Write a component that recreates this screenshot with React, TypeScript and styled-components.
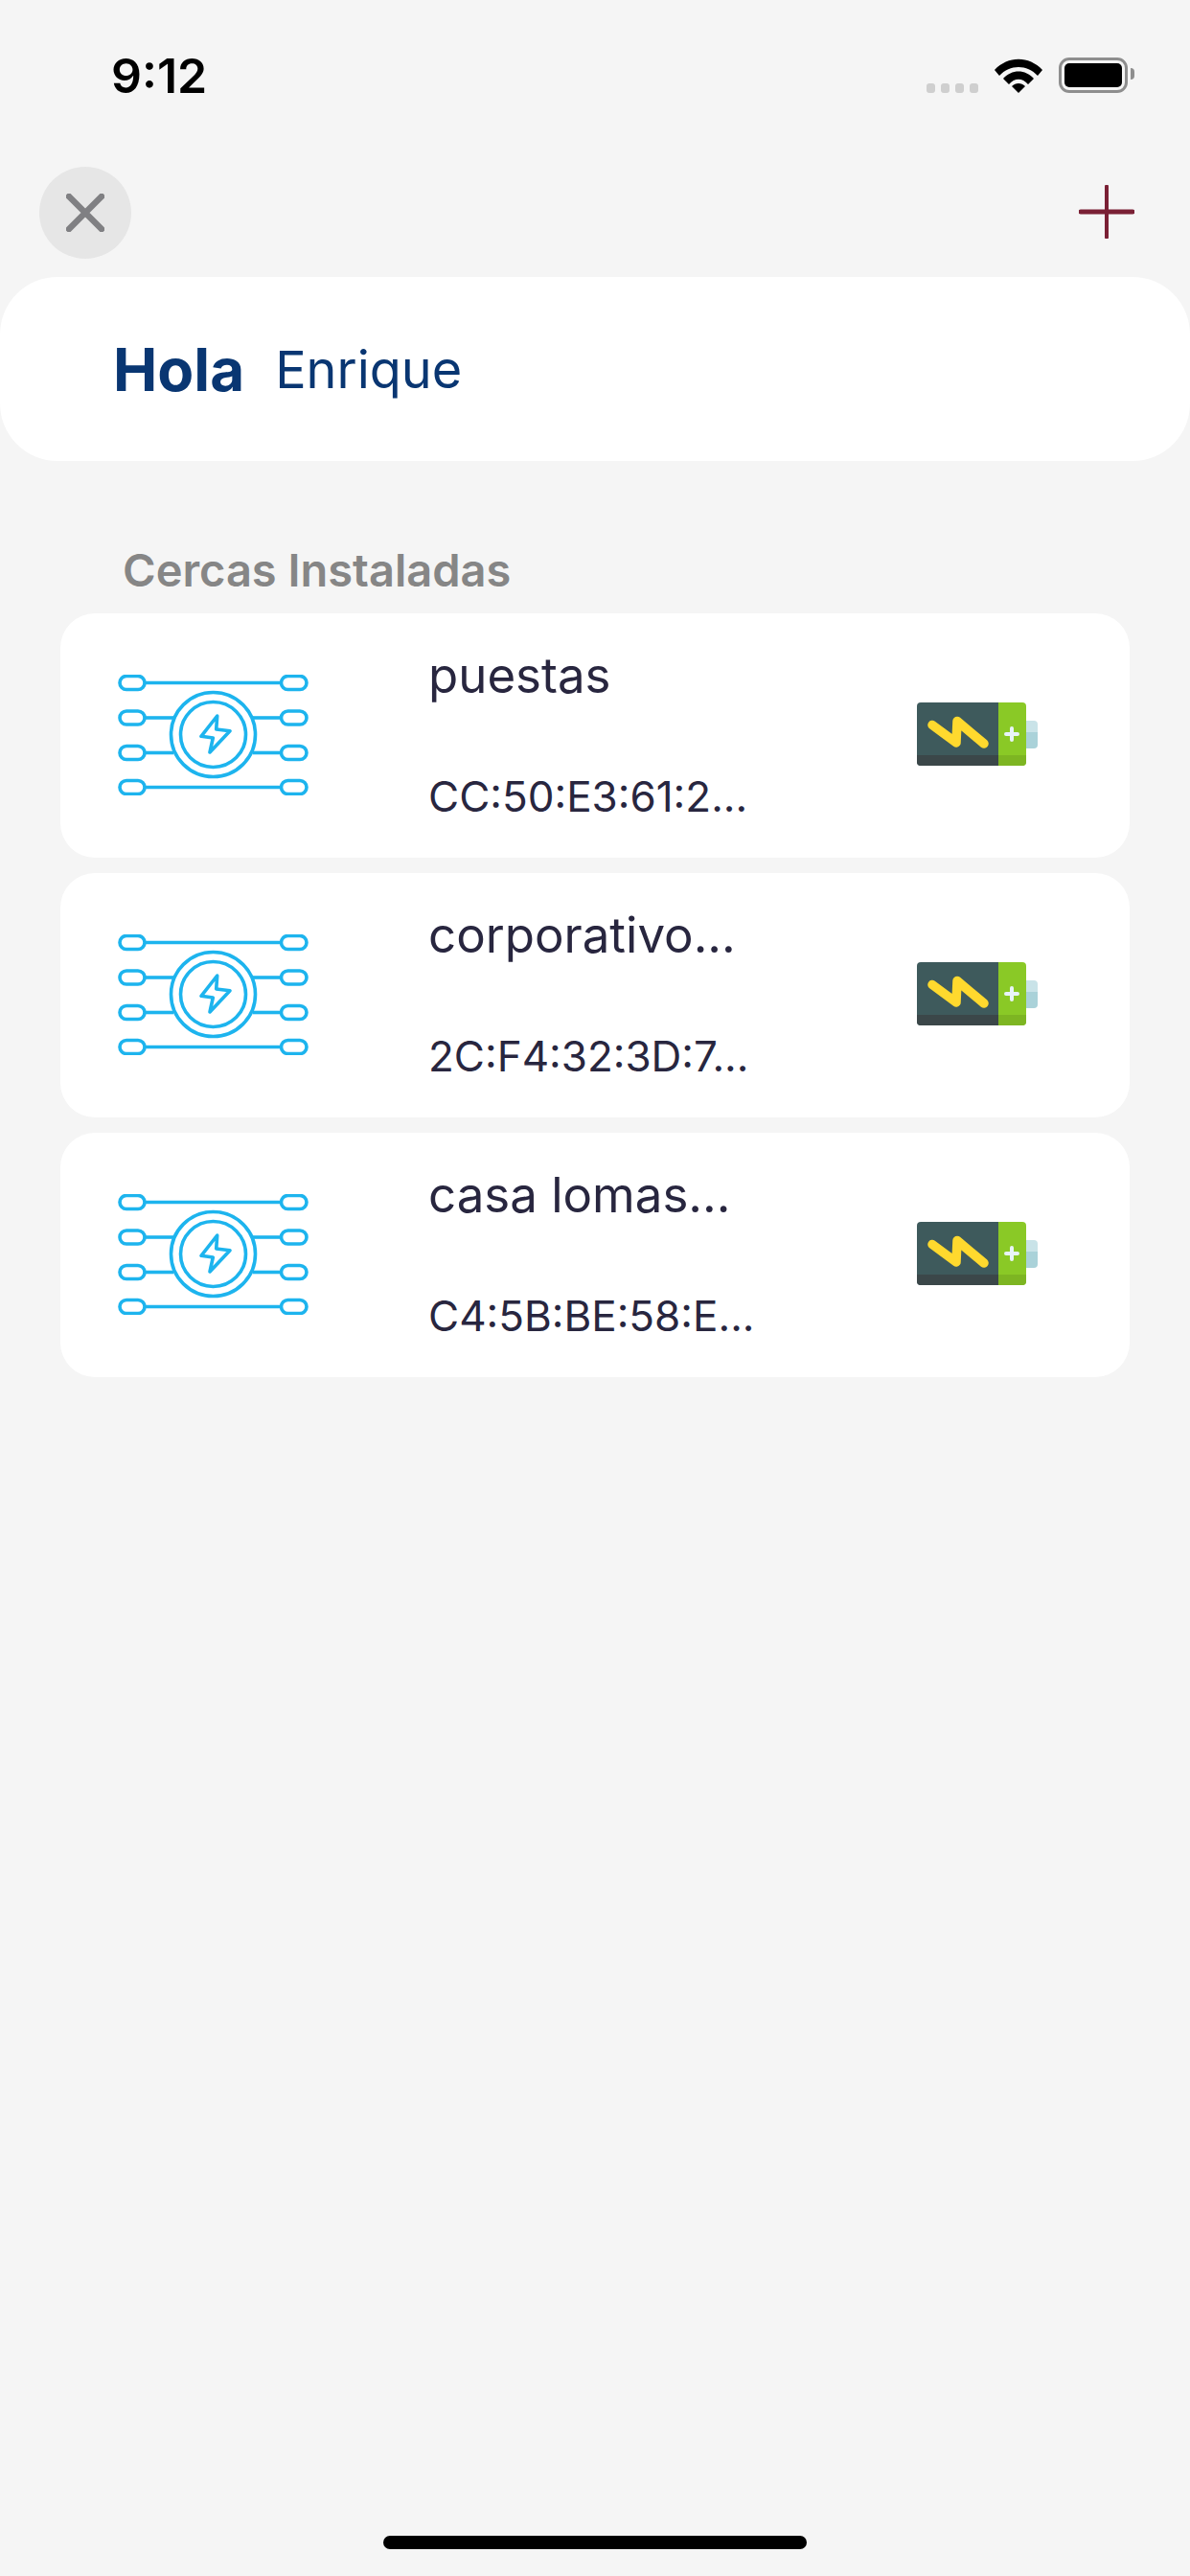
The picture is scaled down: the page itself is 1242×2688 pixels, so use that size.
import React from 'react';
import styled, { createGlobalStyle } from 'styled-components';

const fences = [
  { name: 'puestas', mac: 'CC:50:E3:61:2...' },
  { name: 'corporativo...', mac: '2C:F4:32:3D:7...' },
  { name: 'casa lomas...', mac: 'C4:5B:BE:58:E...' },
];

function FenceIcon() {
  const rows = [8.5, 45, 81.5, 117.5];
  return (
    <FenceSvg width="200" height="126" viewBox="0 0 200 126" fill="none" stroke="#1db4ee" strokeWidth="3.6">
      {rows.map((y, i) => {
        const inner = i === 1 || i === 2;
        return (
          <g key={y}>
            <rect x="2" y={y - 7} width="26" height="14" rx="7" />
            <rect x="170.5" y={y - 7} width="26.5" height="14" rx="7" />
            {inner ? (
              <>
                <line x1="28" y1={y} x2="58" y2={y} />
                <line x1="141" y1={y} x2="170.5" y2={y} />
              </>
            ) : (
              <line x1="28" y1={y} x2="170.5" y2={y} />
            )}
          </g>
        );
      })}
      <circle cx="99.5" cy="62.5" r="44" />
      <circle cx="99.5" cy="62.5" r="34" />
      <path d="M103.7 43 L87 64.3 L99.3 66 L96 81 L117 58.7 L102.7 57 Z" strokeLinejoin="round" />
    </FenceSvg>
  );
}

function BatteryIcon() {
  return (
    <BatterySvg width="128" height="68" viewBox="0 0 128 68">
      <path d="M115 20 h8 a4 4 0 0 1 4 4 v8 h-12 z" fill="#c9e3e8" />
      <path d="M115 32 h12 v13 a4 4 0 0 1 -4 4 h-8 z" fill="#aad2d9" />
      <path d="M5 1 H86 V67 H5 a4 4 0 0 1 -4 -4 V5 a4 4 0 0 1 4 -4 z" fill="#3e5a5c" />
      <path d="M1 56 H86 V67 H5 a4 4 0 0 1 -4 -4 z" fill="#3b4749" />
      <path d="M86 1 H111 a4 4 0 0 1 4 4 V63 a4 4 0 0 1 -4 4 H86 z" fill="#8ac926" />
      <path d="M86 56 H115 V63 a4 4 0 0 1 -4 4 H86 z" fill="#7db522" />
      <path d="M17 24.5 L42 43 L43 20.5 L71 44" fill="none" stroke="#ffd92e" strokeWidth="9.5" strokeLinecap="round" strokeLinejoin="round" />
      <path d="M94 34 H106 M100 28 V40" fill="none" stroke="#e8f4f8" strokeWidth="4" strokeLinecap="round" />
    </BatterySvg>
  );
}

function App() {
  return (
    <>
      <GlobalStyle />
      <Page>
        <StatusBar>
          <Time>9:12</Time>
          <StatusIcons>
            <Signal>
              <i /><i /><i /><i />
            </Signal>
            <svg width="52" height="38" viewBox="0 0 52 38">
              <path d="M1 14 C15 -1 37 -1 51 14 L46 20 C35 8 17 8 6 20 Z" fill="#000" />
              <path d="M10 23 C19 13 33 13 42 23 L36 29 C30 22 22 22 16 29 Z" fill="#000" />
              <path d="M19 31 C23 27 29 27 33 31 L26 38 Z" fill="#000" />
            </svg>
            <BatteryShell>
              <BatteryFill />
              <BatteryCap />
            </BatteryShell>
          </StatusIcons>
        </StatusBar>

        <TopBar>
          <CloseButton>
            <svg width="40" height="40" viewBox="0 0 40 40" fill="none" stroke="#808083" strokeWidth="6.5" strokeLinecap="round">
              <path d="M3 3 L37 37 M37 3 L3 37" />
            </svg>
          </CloseButton>
          <AddButton>
            <svg width="58" height="56" viewBox="0 0 58 56" fill="none" stroke="#7a2035" strokeLinecap="round">
              <path d="M2 28 H56" strokeWidth="5" />
              <path d="M29 1.5 V54.5" strokeWidth="4" />
            </svg>
          </AddButton>
        </TopBar>

        <Greeting>
          <Hello>Hola</Hello>
          <UserName>Enrique</UserName>
        </Greeting>

        <SectionTitle>Cercas Instaladas</SectionTitle>

        <List>
          {fences.map((f) => (
            <Card key={f.mac}>
              <FenceIcon />
              <Info>
                <Name>{f.name}</Name>
                <Mac>{f.mac}</Mac>
              </Info>
              <BatteryIcon />
            </Card>
          ))}
        </List>

        <HomeIndicator />
      </Page>
    </>
  );
}

export default App;

/* Styled Components */

const GlobalStyle = createGlobalStyle`
  html, body {
    margin: 0;
    padding: 0;
    background: #f5f5f5;
  }
`;

const Page = styled.div`
  width: 1242px;
  height: 2688px;
  display: flex;
  flex-direction: column;
  background: #f5f5f5;
  font-family: Inter, "Liberation Sans", sans-serif;
  overflow: hidden;
`;

const StatusBar = styled.div`
  height: 100px;
  padding: 56px 62px 0 116px;
  box-sizing: border-box;
  display: flex;
  justify-content: space-between;
  align-items: flex-start;
`;

const Time = styled.div`
  font-size: 50px;
  font-weight: 600;
  line-height: 46px;
  color: #000;
`;

const StatusIcons = styled.div`
  display: flex;
  align-items: flex-end;
  gap: 16px;
  height: 38px;
  margin-top: 3px;
`;

const Signal = styled.div`
  display: flex;
  gap: 6px;

  i {
    display: block;
    width: 9px;
    height: 10px;
    border-radius: 3px;
    background: #cfcfcf;
  }
`;

const BatteryShell = styled.div`
  position: relative;
  width: 72px;
  height: 37px;
  box-sizing: border-box;
  border: 3px solid #8e8e8e;
  border-radius: 11px;
  padding: 3px;
  margin-right: 3px;
`;

const BatteryFill = styled.div`
  height: 100%;
  background: #000;
  border-radius: 5px;
`;

const BatteryCap = styled.div`
  position: absolute;
  right: -10px;
  top: 8px;
  width: 4px;
  height: 12px;
  background: #8e8e8e;
  border-radius: 0 4px 4px 0;
`;

const TopBar = styled.div`
  height: 189px;
  padding: 74px 58px 20px 41px;
  box-sizing: border-box;
  display: flex;
  justify-content: space-between;
  align-items: flex-start;
`;

const CloseButton = styled.div`
  width: 96px;
  height: 96px;
  border-radius: 50%;
  background: #e6e6e6;
  display: flex;
  align-items: center;
  justify-content: center;
`;

const AddButton = styled.div`
  margin-top: 19px;
  line-height: 0;
`;

const Greeting = styled.div`
  height: 192px;
  background: #fff;
  border-radius: 60px;
  display: flex;
  align-items: center;
  gap: 32px;
  padding-left: 118px;
`;

const Hello = styled.div`
  font-size: 62px;
  font-weight: 700;
  color: #093672;
`;

const UserName = styled.div`
  font-size: 54px;
  font-weight: 400;
  color: #093672;
`;

const SectionTitle = styled.div`
  margin: 89px 0 0 128px;
  height: 70px;
  line-height: 50px;
  font-size: 47px;
  font-weight: 600;
  color: #868686;
`;

const List = styled.div`
  margin: 0 63px;
  display: flex;
  flex-direction: column;
  gap: 16px;
`;

const Card = styled.div`
  height: 255px;
  background: #fff;
  border-radius: 36px;
  box-sizing: border-box;
  padding: 0 95px 0 60px;
  display: flex;
  align-items: center;
  justify-content: space-between;
`;

const FenceSvg = styled.svg`
  margin-bottom: 2px;
`;

const BatterySvg = styled.svg`
  margin-bottom: 3px;
`;

const Info = styled.div`
  width: 400px;
  margin-left: 124px;
  margin-right: auto;
  height: 255px;
  box-sizing: border-box;
  padding-top: 35px;
  color: #28263f;
`;

const Name = styled.div`
  font-size: 51px;
  line-height: 60px;
  height: 131px;
  white-space: nowrap;
`;

const Mac = styled.div`
  font-size: 44px;
  line-height: 50px;
  white-space: nowrap;
`;

const HomeIndicator = styled.div`
  margin: auto auto 28px;
  width: 442px;
  height: 14px;
  border-radius: 7px;
  background: #000;
`;
